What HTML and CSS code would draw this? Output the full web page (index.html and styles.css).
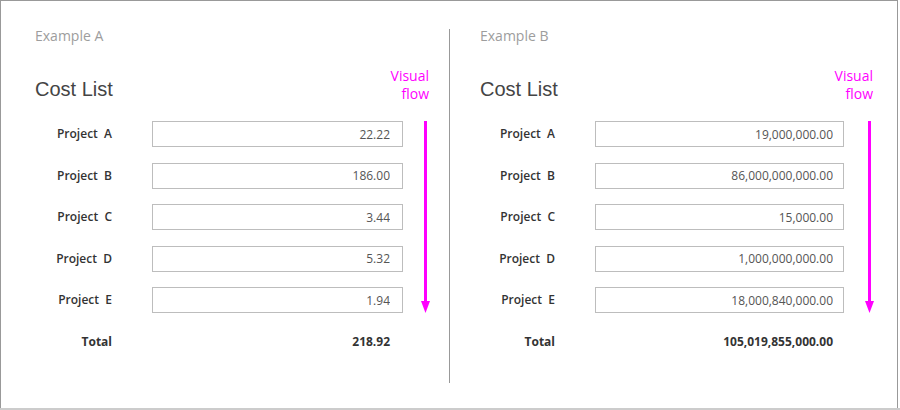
FILE: index.html
```html
<!DOCTYPE html>
<html lang="en">
<head>
<meta charset="utf-8">
<title>Cost List examples</title>
<link rel="stylesheet" href="styles.css">
</head>
<body>
<div class="page">
  <div class="frame">
    <section class="panel panel-a">
      <div class="example">Example A</div>
      <div class="header">
        <h2 class="title">Cost List</h2>
        <div class="flow-label">Visual<br>flow</div>
      </div>
      <div class="grid">
        <div class="label">Project  A</div>
        <input class="field" type="text" value="22.22" readonly>
        <div class="label">Project  B</div>
        <input class="field" type="text" value="186.00" readonly>
        <div class="label">Project  C</div>
        <input class="field" type="text" value="3.44" readonly>
        <div class="label">Project  D</div>
        <input class="field" type="text" value="5.32" readonly>
        <div class="label">Project  E</div>
        <input class="field" type="text" value="1.94" readonly>
        <div class="label total">Total</div>
        <div class="total-value">218.92</div>
        <svg class="arrow" width="9" height="192" viewBox="0 0 9 192" aria-hidden="true">
          <rect x="3" y="0" width="3" height="181" fill="#ff00ff"/>
          <polygon points="0,180 9,180 4.5,192" fill="#ff00ff"/>
        </svg>
      </div>
    </section>
    <div class="divider"></div>
    <section class="panel panel-b">
      <div class="example">Example B</div>
      <div class="header">
        <h2 class="title">Cost List</h2>
        <div class="flow-label">Visual<br>flow</div>
      </div>
      <div class="grid">
        <div class="label">Project  A</div>
        <input class="field" type="text" value="19,000,000.00" readonly>
        <div class="label">Project  B</div>
        <input class="field" type="text" value="86,000,000,000.00" readonly>
        <div class="label">Project  C</div>
        <input class="field" type="text" value="15,000.00" readonly>
        <div class="label">Project  D</div>
        <input class="field" type="text" value="1,000,000,000.00" readonly>
        <div class="label">Project  E</div>
        <input class="field" type="text" value="18,000,840,000.00" readonly>
        <div class="label total">Total</div>
        <div class="total-value">105,019,855,000.00</div>
        <svg class="arrow" width="9" height="192" viewBox="0 0 9 192" aria-hidden="true">
          <rect x="3" y="0" width="3" height="181" fill="#ff00ff"/>
          <polygon points="0,180 9,180 4.5,192" fill="#ff00ff"/>
        </svg>
      </div>
    </section>
  </div>
</div>
</body>
</html>
```

FILE: styles.css
```css
* { box-sizing: border-box; }

html, body {
  margin: 0;
  padding: 0;
  background: #ffffff;
}

body {
  font-family: "Open Sans", "Noto Sans", sans-serif;
  color: #333;
}

.page {
  width: 900px;
  height: 410px;
  border-bottom: 2px solid #cccccc;
}

.frame {
  width: 898px;
  height: 408px;
  border: 1px solid #999999;
  border-bottom: none;
  display: flex;
  align-items: flex-start;
}

.panel {
  padding-top: 25px;
}

.panel-a {
  width: 448px;
  padding-left: 34px;
  --label-col: 117px;
  --input-col: 251px;
  --arrow-col: 27px;
  --text-pad: 12px;
}

.panel-b {
  flex: 1;
  padding-left: 30px;
  --label-col: 115px;
  --input-col: 249px;
  --arrow-col: 30px;
  --text-pad: 10px;
}

.divider {
  width: 1px;
  height: 354px;
  margin-top: 28px;
  background: #999999;
}

.example {
  font-size: 14px;
  line-height: 20px;
  color: #9d9d9d;
}

.header {
  margin-top: 21px;
  width: calc(var(--label-col) + var(--input-col) + var(--arrow-col));
  display: flex;
  justify-content: space-between;
  align-items: flex-end;
}

.title {
  margin: 0 0 2px 0;
  font-family: "Liberation Sans", Arial, sans-serif;
  font-weight: normal;
  font-size: 20px;
  line-height: 24px;
  color: #444;
}

.flow-label {
  font-size: 14px;
  line-height: 18px;
  color: #ff00ff;
  text-align: right;
  padding-right: 1px;
}

.grid {
  margin-top: 18px;
  display: grid;
  grid-template-columns: var(--label-col) var(--input-col) var(--arrow-col);
  grid-auto-rows: 26px;
  row-gap: 15.5px;
}

.label {
  grid-column: 1;
  padding-right: 40px;
  text-align: right;
  white-space: pre;
  font-size: 12px;
  font-weight: 600;
  line-height: 26px;
  color: #333;
}

.label.total {
  font-weight: 700;
}

.field {
  grid-column: 2;
  width: 100%;
  height: 26px;
  margin: 0;
  padding: 0 var(--text-pad);
  border: 1px solid #bdbdbd;
  border-radius: 0;
  background: #fff;
  font-family: "Open Sans", "Noto Sans", sans-serif;
  font-size: 12px;
  color: #555;
  text-align: right;
  outline: none;
}

.total-value {
  grid-column: 2;
  padding-right: calc(var(--text-pad) + 1px);
  text-align: right;
  font-size: 12px;
  font-weight: 700;
  line-height: 26px;
  color: #333;
}

.arrow {
  grid-column: 3;
  grid-row: 1 / 6;
  justify-self: end;
  align-self: start;
  display: block;
}
```
